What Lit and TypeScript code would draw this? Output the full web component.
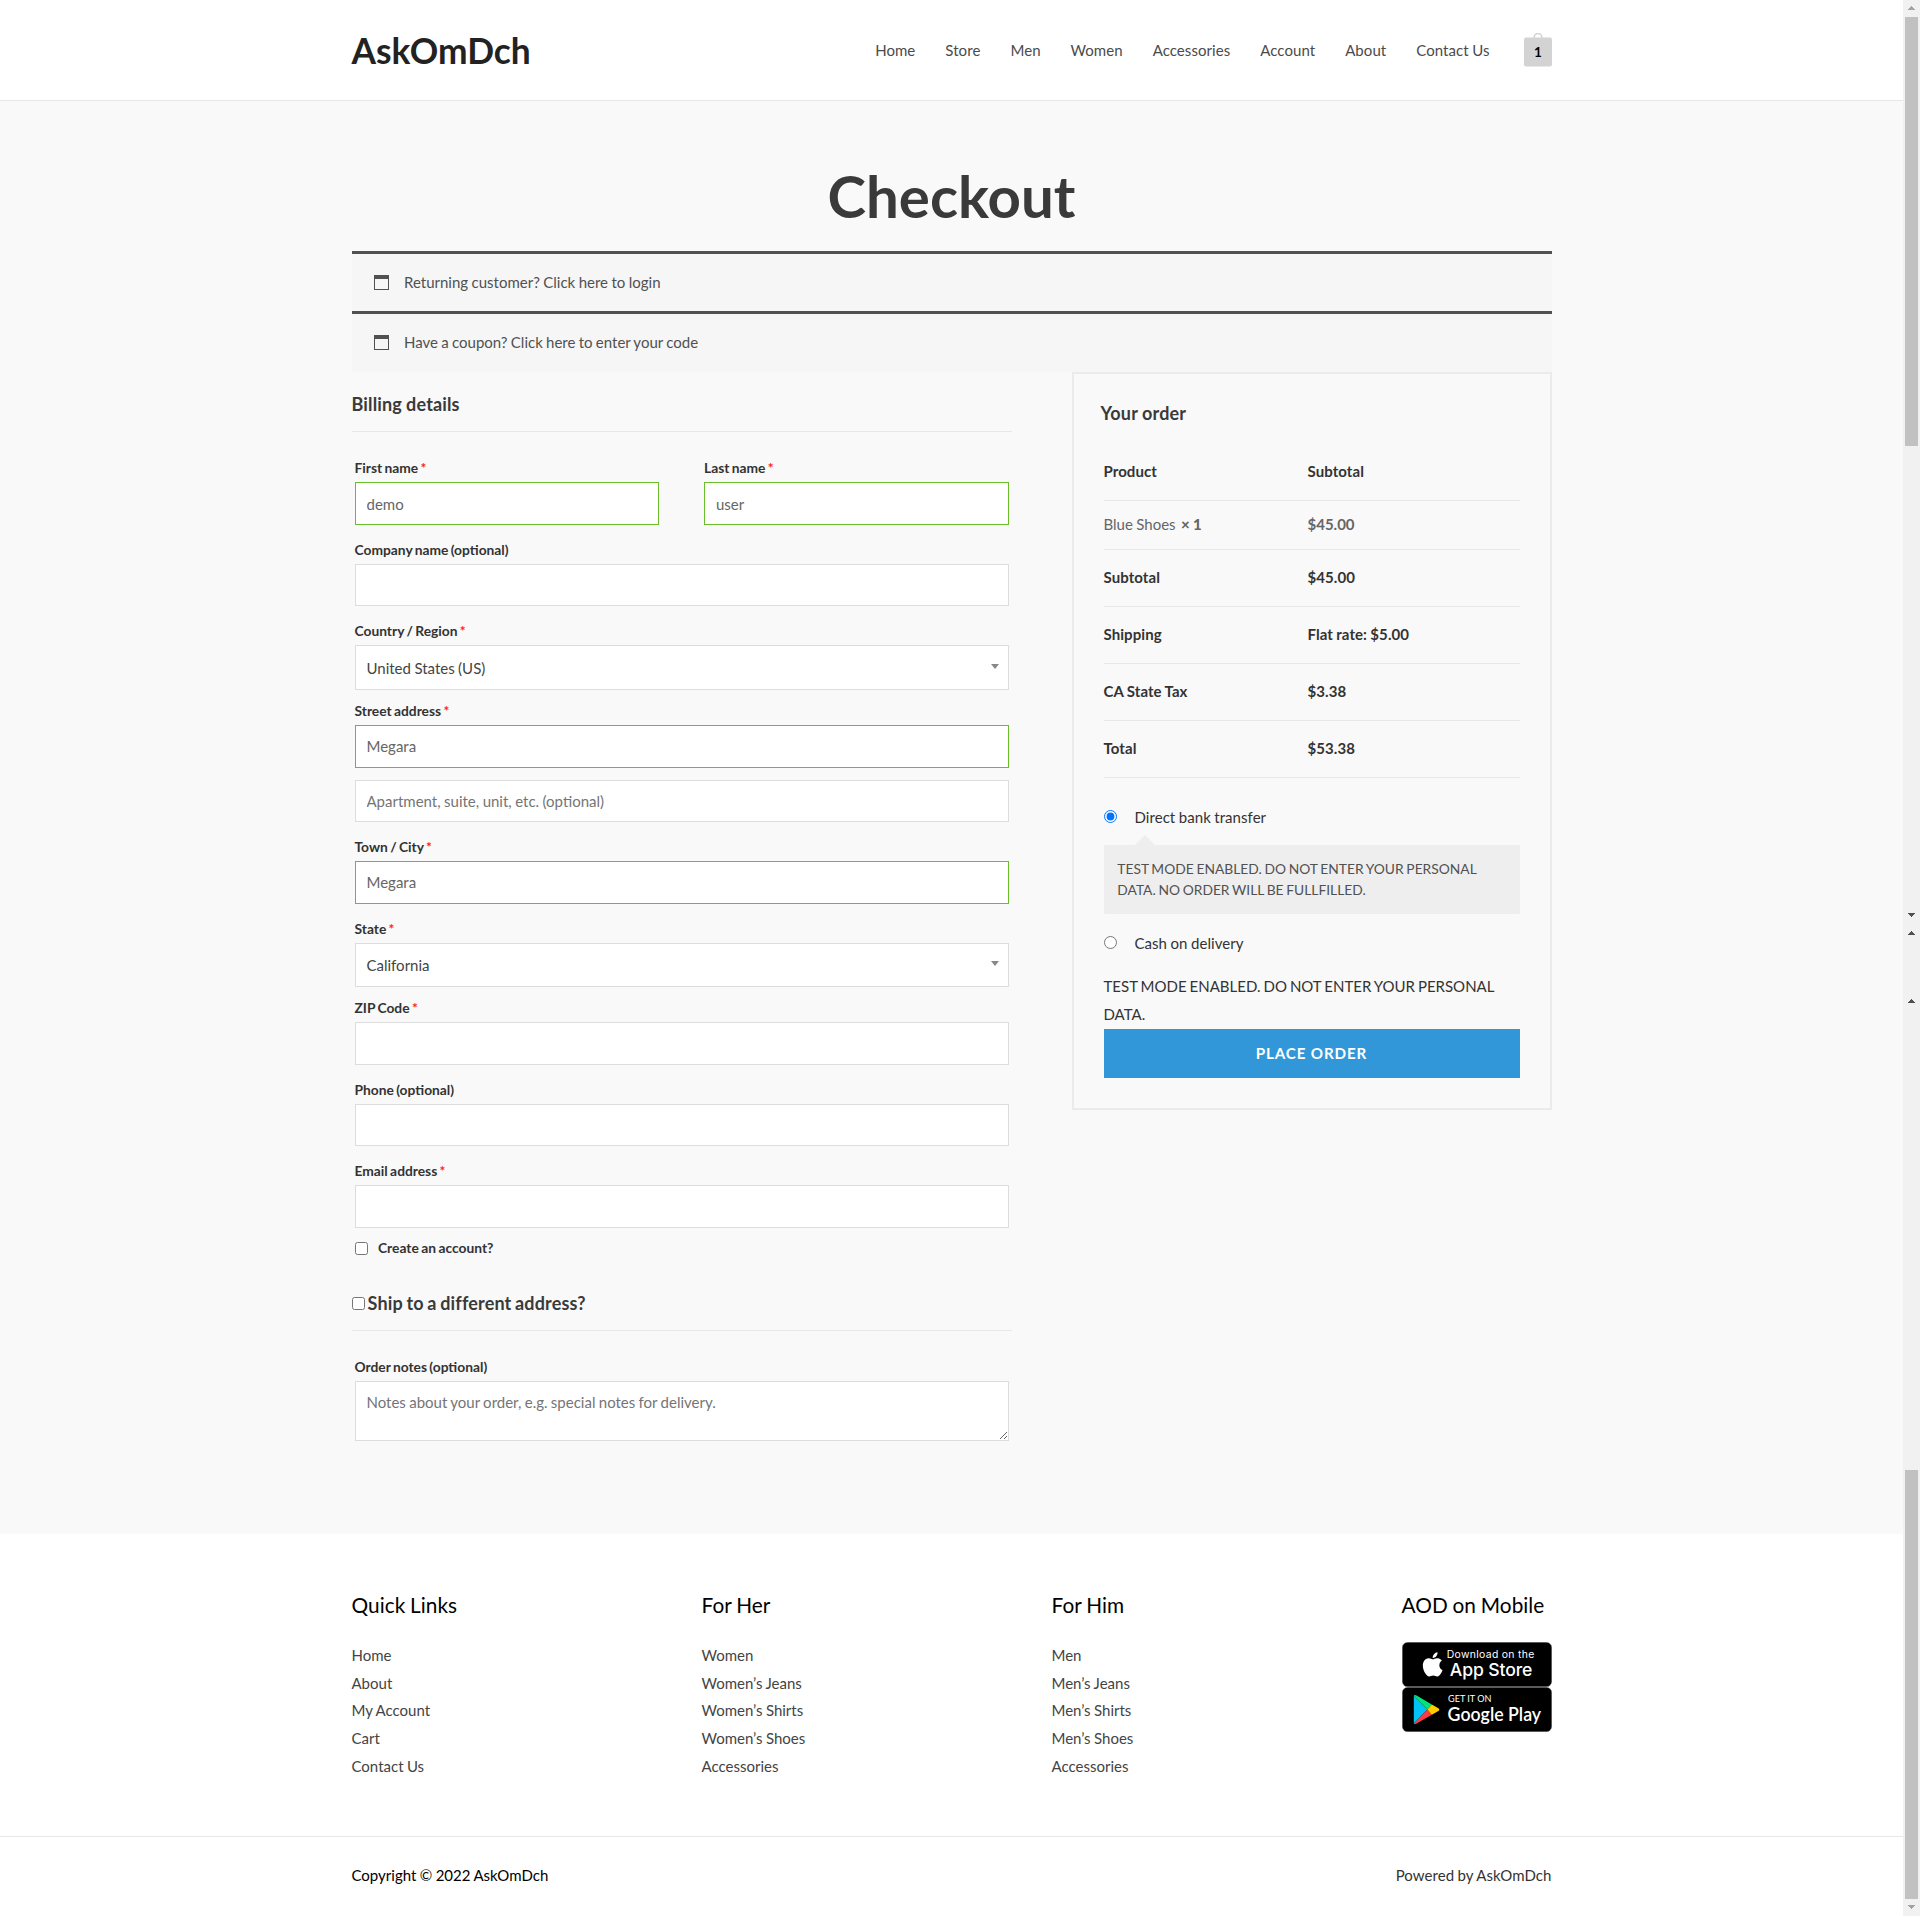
import { LitElement, html, css, svg, nothing } from "lit";
import { customElement } from "lit/decorators.js";
import { classMap } from "lit/directives/class-map.js";

interface Field {
  label?: string;
  required?: boolean;
  kind: "input" | "select";
  value?: string;
  placeholder?: string;
  size: number;
  gap: "none" | "tight" | "normal" | "wide";
  valid?: boolean;
}

const NAV = ["Home", "Store", "Men", "Women", "Accessories", "Account", "About", "Contact Us"];

const NAMES: Field[] = [
  { label: "First name", required: true, kind: "input", value: "demo", size: 43, gap: "none", valid: true },
  { label: "Last name", required: true, kind: "input", value: "user", size: 43, gap: "none", valid: true },
];

const FIELDS: Field[] = [
  { label: "Company name (optional)", kind: "input", size: 42, gap: "normal" },
  { label: "Country / Region", required: true, kind: "select", value: "United States (US)", size: 45, gap: "normal" },
  { label: "Street address", required: true, kind: "input", value: "Megara", size: 43, gap: "tight", valid: true },
  { kind: "input", placeholder: "Apartment, suite, unit, etc. (optional)", size: 42, gap: "wide" },
  { label: "Town / City", required: true, kind: "input", value: "Megara", size: 43, gap: "normal", valid: true },
  { label: "State", required: true, kind: "select", value: "California", size: 44, gap: "normal" },
  { label: "ZIP Code", required: true, kind: "input", size: 43, gap: "tight" },
  { label: "Phone (optional)", kind: "input", size: 42, gap: "normal" },
  { label: "Email address", required: true, kind: "input", size: 43, gap: "normal" },
];

const TOTALS = [
  ["Subtotal", "$45.00"],
  ["Shipping", "Flat rate: $5.00"],
  ["CA State Tax", "$3.38"],
  ["Total", "$53.38"],
];

const FOOTER = [
  { title: "Quick Links", links: ["Home", "About", "My Account", "Cart", "Contact Us"] },
  { title: "For Her", links: ["Women", "Women’s Jeans", "Women’s Shirts", "Women’s Shoes", "Accessories"] },
  { title: "For Him", links: ["Men", "Men’s Jeans", "Men’s Shirts", "Men’s Shoes", "Accessories"] },
];

const arrow = (top: number, up: boolean, color: string) =>
  svg`<path fill=${color} d=${up ? `M5 ${top + 4}h7v-1h-1v-1h-1v-1h-1v-1h-1v1h-1v1h-1v1h-1z` : `M5 ${top}h7v1h-1v1h-1v1h-1v1h-1v-1h-1v-1h-1v-1h-1z`} />`;

@customElement("app-root")
export class AppRoot extends LitElement {
  static styles = css`
    :host { display: flex; width: 1920px; height: 1916px; overflow: hidden; background: #fff; font-family: Lato, "Liberation Sans", sans-serif; font-size: 15px; line-height: 27.75px; word-spacing: -0.4px; color: #333; }
    * { box-sizing: border-box; }
    h1, h2, h3, p, ul { margin: 0; padding: 0; }
    ul { list-style: none; }
    .page { width: 1903px; display: flex; flex-direction: column; }
    .bar { width: 17px; height: 1916px; display: block; flex: none; }
    .wrap { width: 1200px; margin: 0 auto; }
    .header { height: 101px; border-bottom: 1px solid #e6e6e6; }
    .header .wrap { height: 100px; display: flex; align-items: center; justify-content: space-between; }
    .brand { font-size: 35.3px; font-weight: 700; line-height: 42px; padding-top: 2px; color: #222; }
    .menu { display: flex; align-items: center; color: #4b4b4b; letter-spacing: 0.06px; }
    .menu a { padding: 1px 15px 0; }
    .menu .cart { display: block; margin: -1px 0 0 19px; }
    .main { height: 1433px; background: #f9f9f9; }
    .title { height: 150px; padding-top: 59px; text-align: center; font-size: 58.2px; line-height: 72px; font-weight: 700; color: #3a3a3a; }
    .notice { display: flex; align-items: center; gap: 15px; height: 60px; padding-left: 22.5px; border-top: 3px solid #515151; background: #f6f6f6; color: #515151; }
    .notice.last { height: 61px; padding-bottom: 1px; word-spacing: -0.55px; }
    .window { width: 15px; height: 15px; border: 1px solid #515151; border-top-width: 4px; }
    .columns { display: flex; justify-content: space-between; align-items: flex-start; }
    .billing { width: 660px; }
    .section { font-size: 18px; font-weight: 700; line-height: 24px; letter-spacing: 0.15px; color: #3a3a3a; border-bottom: 1px solid #e8e8e8; }
    .section.first { height: 60px; padding-top: 20px; margin-bottom: 22px; }
    .section.ship { display: flex; align-items: flex-start; gap: 3px; height: 40px; padding-top: 0; margin: 29px 0 22px; word-spacing: -0.9px; }
    .fields { padding: 0 3px; }
    .pair { display: grid; grid-template-columns: 304px 304.5px; justify-content: space-between; }
    .normal { margin-top: 11px; }
    .tight { margin-top: 7px; }
    .wide { margin-top: 12px; }
    .label { display: block; height: 28px; font-size: 13.8px; line-height: 27px; font-weight: 700; word-spacing: -1px; color: #333; }
    .star { color: #f22; font-weight: 700; }
    .control { display: block; width: 100%; margin: 0; padding: 0 11px; border: 1px solid #ddd; border-radius: 0; background: #fff; font: 15px/20px Lato, sans-serif; word-spacing: -0.4px; color: #666; outline: none; }
    .control::placeholder { color: #757575; opacity: 1; }
    .valid { border-color: #69bf29; }
    .tight .valid, .normal .valid { padding-bottom: 2px; }
    .select { display: flex; align-items: center; justify-content: space-between; padding-right: 9px; color: #444; }
    .caret { border: 4px solid transparent; border-top: 5px solid #888; border-bottom: 0; margin-top: -3px; }
    textarea.control { height: 60px; padding: 10px 11px; resize: vertical; word-spacing: -0.5px; }
    .check { width: 13px; height: 13px; margin: 0; flex: none; }
    .account { display: flex; align-items: center; gap: 10.5px; height: 27px; margin-top: 7px; font-size: 13.8px; font-weight: 700; word-spacing: -0.9px; }
    .account span { margin-top: -2px; }
    .ship .check { margin-top: 6px; }
    .order { width: 480px; height: 738px; border: 2px solid #ebebeb; padding: 27px 30px 0; }
    .order h3 { margin-left: -3px; height: 43px; font-size: 18px; line-height: 24px; letter-spacing: 0.2px; font-weight: 700; color: #3a3a3a; }
    .row { display: grid; grid-template-columns: 204px 1fr; height: 57px; align-items: center; border-bottom: 1px solid #e8e8e8; font-weight: 700; letter-spacing: 0.07px; color: #333; }
    .item { height: 49px; color: #666; letter-spacing: 0; }
    .item .name { font-weight: 400; }
    .item b { margin-left: 2px; }
    .pay { display: flex; align-items: center; gap: 18px; height: 28px; letter-spacing: 0.05px; }
    .pay.bank { margin-top: 26px; }
    .pay .check { margin-top: -3px; }
    .tip { position: relative; height: 69px; margin: 13px 0 16px; padding: 13px 13.8px; border-radius: 2px; background: #eee; font-size: 13.8px; line-height: 21px; word-spacing: -0.8px; color: #515151; }
    .tip::before { content: ""; position: absolute; left: 31px; top: -10px; border: 10px solid transparent; border-top: 0; border-bottom: 10px solid #eee; }
    .terms { margin-top: 15px; height: 56px; word-spacing: -0.85px; }
    .place { display: block; width: 100%; height: 49px; margin: 0; padding: 0 0 2px; border: 0; background: #3197d8; color: #fff; font: 700 15.2px/20px Lato, sans-serif; letter-spacing: 0.85px; }
    .footer { height: 303px; border-bottom: 1px solid #e8e8e8; }
    .footer .wrap { display: grid; grid-template-columns: 300px 300px 300px 150px; column-gap: 50px; padding-top: 56px; }
    .footer h2 { font-size: 20.8px; font-weight: 400; line-height: 30px; word-spacing: -0.6px; letter-spacing: 0.04px; color: #000; white-space: nowrap; margin-bottom: 22px; }
    .footer ul { margin-top: -0.14px; }
    .footer a { color: #444; }
    .badge { display: block; width: 150px; height: 45px; }
    .badge text { word-spacing: 0; }
    .legal { display: flex; justify-content: space-between; height: 79px; padding-bottom: 2px; align-items: center; color: #000; }
    .powered { color: #333; letter-spacing: 0.05px; }
  `;

  private field(f: Field) {
    const cls = { control: true, valid: !!f.valid, select: f.kind === "select" };
    return html`<div class=${f.gap}>
      ${f.label ? html`<label class="label">${f.label} ${f.required ? html`<span class="star">*</span>` : nothing}</label>` : nothing}
      ${f.kind === "select"
        ? html`<div class=${classMap(cls)} style="height:${f.size}px"><span>${f.value}</span><i class="caret"></i></div>`
        : html`<input class=${classMap(cls)} style="height:${f.size}px" .value=${f.value ?? ""} placeholder=${f.placeholder ?? ""} />`}
    </div>`;
  }

  private appStore() {
    return html`<svg class="badge" viewBox="0 0 150 45">
      <rect x=".25" y=".25" width="149.5" height="44.5" rx="5.5" fill="#000" stroke="#8a8a8a" stroke-width=".5" />
      <path transform="translate(18.6 10.3) scale(1.01)" fill="#fff" d="M12.152 6.896c-.948 0-2.415-1.078-3.96-1.04-2.04.027-3.91 1.183-4.961 3.014-2.117 3.675-.546 9.103 1.519 12.09 1.013 1.454 2.208 3.09 3.792 3.039 1.52-.065 2.09-.987 3.935-.987 1.831 0 2.35.987 3.96.948 1.637-.026 2.676-1.48 3.676-2.948 1.156-1.688 1.636-3.325 1.662-3.415-.039-.013-3.182-1.221-3.22-4.857-.026-3.04 2.48-4.494 2.597-4.559-1.429-2.09-3.623-2.324-4.39-2.376-2-.156-3.675 1.09-4.61 1.09zM15.53 3.83c.843-1.012 1.4-2.427 1.245-3.83-1.207.052-2.662.805-3.532 1.818-.78.896-1.454 2.338-1.273 3.714 1.338.104 2.715-.688 3.559-1.701" />
      <g fill="#fff" font-family="Inter, sans-serif">
        <text x="44.8" y="15.6" font-size="10.4" font-weight="400" textLength="87.5">Download on the</text>
        <text x="47.8" y="34" font-size="17.6" font-weight="500" textLength="82.5">App Store</text>
      </g>
    </svg>`;
  }

  private googlePlay() {
    return html`<svg class="badge" viewBox="0 0 150 45">
      <rect x=".25" y=".25" width="149.5" height="44.5" rx="5.5" fill="#000" stroke="#8a8a8a" stroke-width=".5" />
      <path fill="#00c3f5" d="M11.8 8.8v27.6L25.4 22.6z" />
      <path fill="#00e676" d="M11.8 8.8c.6-.9 1.6-.9 2.8-.2l15.2 8.8-4.4 5.2z" />
      <path fill="#ff3a44" d="M11.8 36.4c.6.9 1.6.9 2.8.2l15.2-8.8-4.4-5.2z" />
      <path fill="#ffcd00" d="M29.8 17.4l6.6 3.8c1.2.8 1.2 2 0 2.8l-6.6 3.8-4.4-5.2z" />
      <g fill="#fff" font-family="Lato, sans-serif">
        <text x="46" y="14.8" font-size="9.6" font-weight="400" textLength="43.5" lengthAdjust="spacingAndGlyphs">GET IT ON</text>
        <text x="45.6" y="33.6" font-size="18.6" font-weight="600" textLength="93.5" lengthAdjust="spacingAndGlyphs">Google Play</text>
      </g>
    </svg>`;
  }

  render() {
    return html`
      <div class="page">
        <header class="header">
          <div class="wrap">
            <div class="brand">AskOmDch</div>
            <nav class="menu">
              ${NAV.map((n) => html`<a>${n}</a>`)}
              <svg class="cart" width="28" height="34" viewBox="0 0 28 34">
                <path d="M10.2 6V4.2a3.8 3.8 0 0 1 7.6 0V6" fill="none" stroke="#d3d3d3" stroke-width="1.6" />
                <rect y="4.5" width="28" height="29" rx="2" fill="#d3d3d3" />
                <text x="14" y="24.4" text-anchor="middle" font-size="13.5" font-weight="700" fill="#000">1</text>
              </svg>
            </nav>
          </div>
        </header>

        <main class="main">
          <div class="wrap">
            <h1 class="title">Checkout</h1>
            <div class="notice"><i class="window"></i><span>Returning customer? Click here to login</span></div>
            <div class="notice last"><i class="window"></i><span>Have a coupon? Click here to enter your code</span></div>
            <div class="columns">
              <section class="billing">
                <h3 class="section first">Billing details</h3>
                <div class="fields">
                  <div class="pair">${NAMES.map((f) => this.field(f))}</div>
                  ${FIELDS.map((f) => this.field(f))}
                  <label class="account"><input class="check" type="checkbox" /><span>Create an account?</span></label>
                </div>
                <h3 class="section ship"><input class="check" type="checkbox" /><span>Ship to a different address?</span></h3>
                <div class="fields">
                  <label class="label">Order notes (optional)</label>
                  <textarea class="control" placeholder="Notes about your order, e.g. special notes for delivery."></textarea>
                </div>
              </section>

              <section class="order">
                <h3>Your order</h3>
                <div class="row"><span>Product</span><span>Subtotal</span></div>
                <div class="row item"><span><span class="name">Blue Shoes&nbsp;</span><b>× 1</b></span><span>$45.00</span></div>
                ${TOTALS.map(([k, v]) => html`<div class="row"><span>${k}</span><span>${v}</span></div>`)}
                <label class="pay bank"><input class="check" type="radio" name="pay" checked /><span>Direct bank transfer</span></label>
                <div class="tip">TEST MODE ENABLED. DO NOT ENTER YOUR PERSONAL DATA. NO ORDER WILL BE FULLFILLED.</div>
                <label class="pay"><input class="check" type="radio" name="pay" /><span>Cash on delivery</span></label>
                <p class="terms">TEST MODE ENABLED. DO NOT ENTER YOUR PERSONAL DATA.</p>
                <button class="place">PLACE ORDER</button>
              </section>
            </div>
          </div>
        </main>

        <footer class="footer">
          <div class="wrap">
            ${FOOTER.map((c) => html`<div><h2>${c.title}</h2><ul>${c.links.map((l) => html`<li><a>${l}</a></li>`)}</ul></div>`)}
            <div><h2>AOD on Mobile</h2>${this.appStore()}${this.googlePlay()}</div>
          </div>
        </footer>
        <div class="wrap legal"><span>Copyright © 2022 AskOmDch</span><span class="powered">Powered by AskOmDch</span></div>
      </div>
      <svg class="bar" viewBox="0 0 17 1916" shape-rendering="crispEdges">
        <rect width="17" height="1916" fill="#f1f1f1" />
        <rect x="2" y="17" width="13" height="429" fill="#c1c1c1" />
        <rect x="2" y="1470" width="13" height="429" fill="#c1c1c1" />
        ${arrow(6, true, "#a3a3a3")}${arrow(913, false, "#505050")}${arrow(931, true, "#505050")}${arrow(999, true, "#505050")}${arrow(1905, false, "#a3a3a3")}
      </svg>`;
  }
}
